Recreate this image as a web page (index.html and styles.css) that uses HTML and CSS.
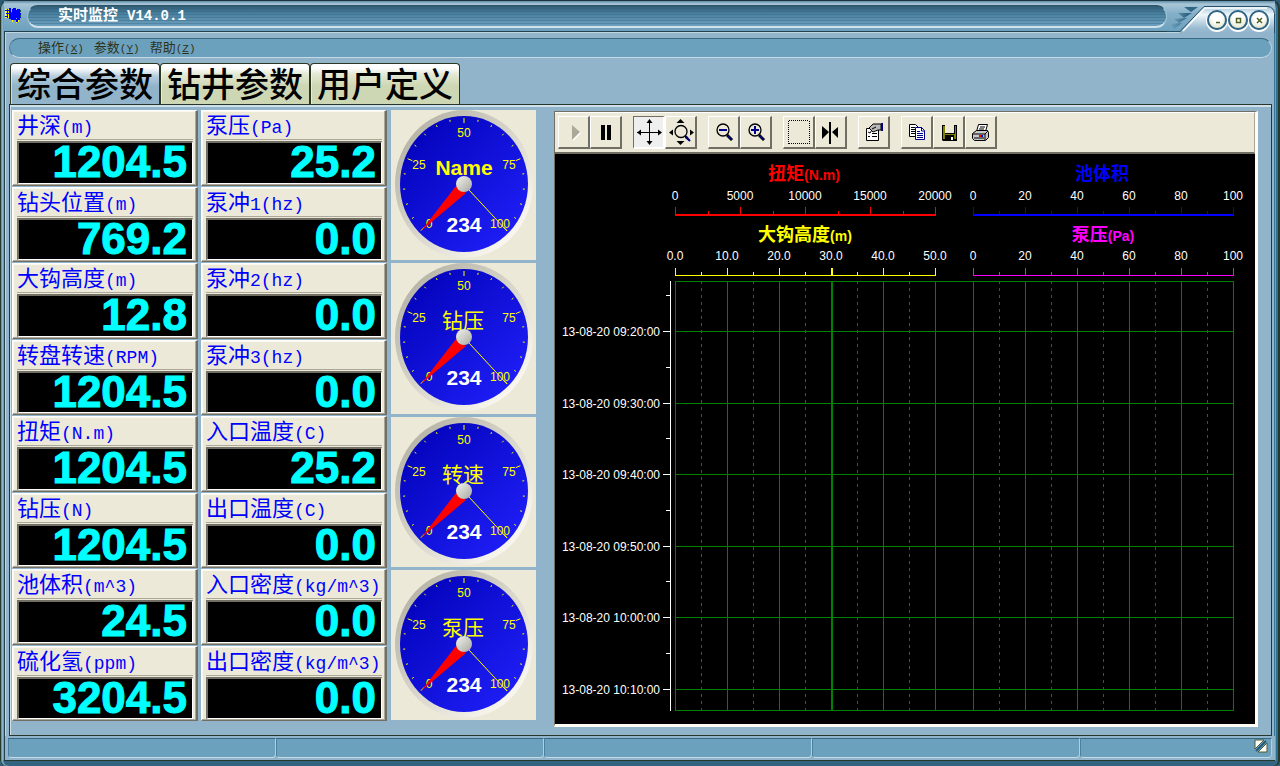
FILE: index.html
```
<!DOCTYPE html>
<html lang="zh-CN">
<head>
<meta charset="utf-8">
<title>实时监控 V14.0.1</title>
<link rel="stylesheet" href="styles.css">
</head>
<body>
<div class="window">
  <header class="titlebar">
    <svg class="app-icon" width="18" height="18" viewBox="0 0 18 18" shape-rendering="crispEdges" aria-hidden="true">
      <path d="M1 2h5v9H1z" fill="#ff0"/>
      <path d="M1 3h4v1H1zM2 6h4v1H2zM1 9h3v1H1zM3 2h1v9H3zM5 1h2v11H5zM8 2h1v3H8zM9 1h3v11H9zM6 5h3v6H6zM8 6h9v5H8zM12 3h1v3h-1zM13 2h3v11h-3zM7 11h4v2H7zM11 12h5v1h-5zM12 13h2v2h-2z" fill="#00f"/>
      <path d="M8 13h1v2H8zM12 15h1v1h-1zM14 13h1v2h-1z" fill="#ff0"/>
      <path d="M16 3h1v2h-1zM16 8h1v2h-1zM7 5h1v1H7z" fill="#064"/>
    </svg>
    <h1 class="title">实时监控 <span class="title-version">V14.0.1</span></h1>
    <div class="caption">
      <svg class="caption-art" width="108" height="33" viewBox="0 0 108 33" aria-hidden="true">
        <defs>
          <linearGradient id="cap" x1="0" y1="0" x2="0" y2="1"><stop offset="0" stop-color="#a9cbdd"/><stop offset=".3" stop-color="#eef6fa"/><stop offset=".8" stop-color="#9bbdd2"/><stop offset="1" stop-color="#91b4cb"/></linearGradient>
          <linearGradient id="fin"><stop offset="0" stop-color="#2f6684" stop-opacity="0"/><stop offset=".6" stop-color="#2f6684"/></linearGradient>
        </defs>
        <path d="M17 7l14 0-7 5zM11 13l14 0-8 5zM7 19l13-1-8 5zM3 24l12-1-8 6z" fill="url(#fin)"/>
        <path d="M12 33L37 7h66l5 5v21z" fill="url(#cap)"/>
        <path d="M0 31.500H13L37 6.500h64q6 1 6.500 7V33" fill="none" stroke="#24506c" stroke-width="1"/>
        <path d="M16 31L38 8h62" fill="none" stroke="#fff" stroke-width="1.500"/>
      </svg>
      <div class="caption-buttons">
        <button class="cap-btn" aria-label="最小化"><svg viewBox="0 0 7 7"><path d="M2 5.500h4" /></svg></button>
        <button class="cap-btn" aria-label="最大化"><svg viewBox="0 0 7 7"><path d="M1.500 1.500h4v4h-4z"/></svg></button>
        <button class="cap-btn" aria-label="关闭"><svg viewBox="0 0 7 7"><path d="M1 1l5 5M6 1l-5 5"/></svg></button>
      </div>
    </div>
  </header>

  <div class="client">
    <nav class="menubar">
      <button class="menu">操作<span class="key">(<u>X</u>)</span></button>
      <button class="menu">参数<span class="key">(<u>Y</u>)</span></button>
      <button class="menu">帮助<span class="key">(<u>Z</u>)</span></button>
    </nav>
    <div class="tabs" role="tablist">
      <button class="tab tab-active" role="tab" aria-selected="true">综合参数</button>
      <button class="tab" role="tab" aria-selected="false">钻井参数</button>
      <button class="tab" role="tab" aria-selected="false">用户定义</button>
    </div>

    <main class="page">
      <section class="readouts">
        <div class="panel"><div class="name">井深<span>(m)</span></div><output class="value">1204.5</output></div>
        <div class="panel"><div class="name">泵压<span>(Pa)</span></div><output class="value">25.2</output></div>
        <div class="panel"><div class="name">钻头位置<span>(m)</span></div><output class="value">769.2</output></div>
        <div class="panel"><div class="name">泵冲<span>1(hz)</span></div><output class="value">0.0</output></div>
        <div class="panel"><div class="name">大钩高度<span>(m)</span></div><output class="value">12.8</output></div>
        <div class="panel"><div class="name">泵冲<span>2(hz)</span></div><output class="value">0.0</output></div>
        <div class="panel"><div class="name">转盘转速<span>(RPM)</span></div><output class="value">1204.5</output></div>
        <div class="panel"><div class="name">泵冲<span>3(hz)</span></div><output class="value">0.0</output></div>
        <div class="panel"><div class="name">扭矩<span>(N.m)</span></div><output class="value">1204.5</output></div>
        <div class="panel"><div class="name">入口温度<span>(C)</span></div><output class="value">25.2</output></div>
        <div class="panel"><div class="name">钻压<span>(N)</span></div><output class="value">1204.5</output></div>
        <div class="panel"><div class="name">出口温度<span>(C)</span></div><output class="value">0.0</output></div>
        <div class="panel"><div class="name">池体积<span>(m^3)</span></div><output class="value">24.5</output></div>
        <div class="panel"><div class="name">入口密度<span>(kg/m^3)</span></div><output class="value">0.0</output></div>
        <div class="panel"><div class="name">硫化氢<span>(ppm)</span></div><output class="value">3204.5</output></div>
        <div class="panel"><div class="name">出口密度<span>(kg/m^3)</span></div><output class="value">0.0</output></div>
      </section>

      <section class="gauges">
        <div class="gauge" data-name="Name" data-value="234"></div>
        <div class="gauge" data-name="钻压" data-value="234"></div>
        <div class="gauge" data-name="转速" data-value="234"></div>
        <div class="gauge" data-name="泵压" data-value="234"></div>
      </section>

      <section class="chart">
        <div class="toolbar" role="toolbar">
          <div class="group">
            <button class="tool" aria-label="继续" disabled><svg viewBox="0 0 28 28"><path d="M14 9l8 7-8 8z" fill="#fff"/><path d="M13 8l8 7-8 8z" fill="#aca899"/></svg></button>
            <button class="tool" aria-label="暂停"><svg viewBox="0 0 28 28"><path d="M10 8h4v15h-4zM16 8h4v15h-4z"/></svg></button>
          </div>
          <div class="group">
            <button class="tool tool-on" aria-label="平移"><svg viewBox="0 0 28 28"><path d="M3 15h23v1H3zM15 3h1v24h-1z"/><path d="M3 15.500l4-3v6zM28 15.500l-4-3v6zM15.500 2l3 4h-6zM15.500 28l3-4h-6z"/></svg></button>
            <button class="tool" aria-label="缩放"><svg viewBox="0 0 28 28"><path d="M3 15.500l4-3v6zM28 15.500l-4-3v6zM14.500 2l4 4h-8zM14.500 28l4-4h-8z"/><circle cx="15" cy="14.500" r="6" fill="none" stroke="#000" stroke-width="1.300"/><path d="M19 18l2 1 3 4-1 1-4-3z"/><path d="M20 20l4 4" stroke="#008" stroke-width="2"/></svg></button>
          </div>
          <div class="group">
            <button class="tool" aria-label="缩小"><svg viewBox="0 0 28 28"><circle cx="14" cy="13" r="6" fill="none" stroke="#000" stroke-width="1.300"/><path d="M18 18l5 5" stroke="#000" stroke-width="3"/><path d="M19 19l4 4" stroke="#008" stroke-width="1.500"/><path d="M10 12h8v2h-8z" fill="#008"/></svg></button>
            <button class="tool" aria-label="放大"><svg viewBox="0 0 28 28"><circle cx="14" cy="13" r="6" fill="none" stroke="#000" stroke-width="1.300"/><path d="M18 18l5 5" stroke="#000" stroke-width="3"/><path d="M19 19l4 4" stroke="#008" stroke-width="1.500"/><path d="M10 12h8v2h-8zM13 9h2v8h-2z" fill="#008"/></svg></button>
          </div>
          <div class="group">
            <button class="tool" aria-label="框选"><svg viewBox="0 0 28 28" shape-rendering="crispEdges"><path d="M5 3.500h20M5 26.500h20M4.500 4v23M25.500 4v23" fill="none" stroke="#000" stroke-dasharray="1 1"/></svg></button>
            <button class="tool" aria-label="游标"><svg viewBox="0 0 28 28"><path d="M13 5h2v22h-2zM6 9l7 6-7 7zM22 10l-6 5 6 6z"/></svg></button>
          </div>
          <div class="group">
            <button class="tool" aria-label="属性"><svg viewBox="0 0 28 28"><path d="M7.500 11.500h12v12h-12z" fill="#fff" stroke="#000"/><path d="M9 15l2 1 2-3M9 19.500h2M13 16.500h5M13 19.500h5" stroke="#000" fill="none"/><path d="M10 11l4-4h8v6h-3l-5 2z" fill="#b8b8b8" stroke="#000"/><path d="M13 12l4-2" stroke="#000"/><path d="M22 6h2v8h-2z" fill="#008"/></svg></button>
          </div>
          <div class="group">
            <button class="tool" aria-label="复制"><svg viewBox="0 0 28 28"><path d="M7.500 7.500h6l3 3v9h-9z" fill="#fff" stroke="#000"/><path d="M9 10.500h4M9 12.500h5M9 14.500h5M9 16.500h5" stroke="#000"/><path d="M13.500 10.500h6l3 3v9h-9z" fill="#fff" stroke="#008"/><path d="M19.500 10v4h3M15 14.500h3M15 16.500h6M15 18.500h6M15 20.500h6" fill="none" stroke="#008"/></svg></button>
            <button class="tool" aria-label="保存"><svg viewBox="0 0 28 28"><path d="M8 8h15v16H9l-1-1z"/><path d="M9 9h2v8h10V9h1v13h-2v-4h-9v4H9z" fill="#808000"/><path d="M11 8h9v8h-9z" fill="#ece9d8"/><path d="M17 20h2v3h-2z" fill="#fff"/></svg></button>
            <button class="tool" aria-label="打印"><svg viewBox="0 0 28 28"><path d="M10.500 14.500l2-7h9l-2 7z" fill="#fff" stroke="#000"/><path d="M14 10h5M13 12h5" stroke="#000"/><path d="M6.500 16.500l4-3h11l1 2v5l-3 3h-11l-2-2z" fill="#c8c8c8" stroke="#000"/><path d="M7 17h12l3-3M19 17v6M8 21h10" fill="none" stroke="#000"/><path d="M13 18h2v2h-2z" fill="#f00"/><path d="M15 18h2v2h-2z" fill="#00f"/></svg></button>
          </div>
        </div>
        <svg class="plot" id="plot" viewBox="0 0 700 569" role="img" aria-label="实时曲线"></svg>
      </section>
    </main>
  </div>

  <footer class="statusbar">
    <div class="cell"></div><div class="cell"></div><div class="cell"></div><div class="cell"></div>
    <div class="cell cell-last">
      <svg width="14" height="14" viewBox="0 0 14 14" aria-hidden="true"><path d="M1 1h9L1 10z" fill="#fff" stroke="#4c5c30"/><path d="M13 4v9H4z" fill="#fff" stroke="#4c5c30"/><path d="M2 12L12 2" stroke="#245a78" stroke-width="2"/></svg>
    </div>
  </footer>
</div>
<script src="script.js"></script>
</body>
</html>
```
FILE: styles.css
```
* { box-sizing: border-box; }

body {
  margin: 0;
  background: #2e5c74;
  font-family: "Liberation Sans", "Noto Sans CJK SC", sans-serif;
}

button { margin: 0; padding: 0; border: 0; background: none; font: inherit; color: inherit; }

.window {
  display: flex;
  flex-direction: column;
  min-height: 100vh;
  padding: 0 5px 5px 4px;
  border-radius: 8px 8px 6px 6px;
  background: #6ca1be;
  border-top: 1px solid #1c3440;
  box-shadow: inset 1px 0 #26382c, inset 2px 0 #5f96b4, inset 3px 0 #8ab4cb, inset -2px 0 #26382c, inset -4px 0 #2f6f92, inset 0 -5px #336580;
}

/* Title bar */
.titlebar {
  display: flex;
  align-items: flex-start;
  height: 30px;
  background: linear-gradient(#5d8ca6, #a9c7d8 3px, #86b0c8 12px, #6ca1be);
}
.app-icon { margin: 6px 3px 0 0; }
.title {
  flex: 1;
  margin: 4px 0 0 2px;
  height: 23px;
  padding-left: 30px;
  border-radius: 11px;
  border: 1px solid #9dc1d4;
  border-top-color: #2c5266;
  border-bottom: 2px solid #cfe2ec;
  background: repeating-linear-gradient(transparent 0 2px, #2c607c55 2px 3px), linear-gradient(#315c74, #4a819f 8px, #6c9fbd);
  color: #fff;
  font-size: 15px;
  line-height: 20px;
  font-weight: bold;
  font-family: "Liberation Mono", "Noto Sans CJK SC", monospace;
}
.title-version { font-size: 14px; }
.caption { position: relative; flex: none; width: 108px; height: 30px; }
.caption-art { display: block; margin-top: -1px; }
.caption-buttons { position: absolute; right: 6px; top: 9px; display: flex; gap: 1px; }
.cap-btn {
  display: flex;
  align-items: center;
  justify-content: center;
  width: 20px;
  height: 20px;
  border-radius: 50%;
  border: 2px solid #2f6486;
  background: radial-gradient(circle at 50% 35%, #fff 35%, #d5dcb4);
  box-shadow: 0 1px 0 1px #fff;
}
.cap-btn svg { width: 7px; height: 7px; }
.cap-btn path { fill: none; stroke: #4c6020; stroke-width: 1.5; }

/* Client area */
.client {
  flex: 1;
  display: flex;
  flex-direction: column;
  padding: 0 3px 0 4px;
  background: #91b4cb;
  border-left: 1px solid #24404e;
  border-top: 1px solid #24404e;
  box-shadow: inset 1px 1px #bfd6e3, inset -1px 0 #3b7896;
}
.menubar {
  display: flex;
  gap: 10px;
  height: 20px;
  margin: 6px 0 5px;
  padding-left: 28px;
  border-radius: 10px;
  border-top: 1px solid #366983;
  border-left: 1px solid #4b819e;
  border-right: 1px solid #b8d0de;
  border-bottom: 1px solid #c4dae6;
  background: #6ca1be;
  color: #2d331a;
  font-size: 13px;
  line-height: 17px;
}
.key { font-size: 11px; font-family: "Liberation Mono", monospace; }

.tabs { display: flex; height: 41px; padding-left: 1px; }
.tab {
  width: 150px;
  padding-top: 2px;
  border: 1px solid #2c3820;
  border-bottom: 0;
  border-radius: 4px 4px 0 0;
  background: linear-gradient(#fff 4px, #e4e9d4 10px, #ced7b3 22px);
  box-shadow: inset 1px 0 #fff8;
  font-size: 34px;
  line-height: 38px;
  font-weight: 500;
  color: #000;
  white-space: nowrap;
}
.tab-active { background: linear-gradient(#fff 4px, #b7cedd 12px, #91b4cb 22px); }

.page {
  flex: 1;
  display: grid;
  grid-template-columns: 375px 145px minmax(300px, 1fr);
  column-gap: 4px;
  padding: 3px 13px 8px 2px;
  border: 1px solid #26382c;
  box-shadow: inset 1px 2px #d0e0ea;
}

/* Digital readouts */
.readouts {
  display: grid;
  grid-template-columns: 1fr 1fr;
  grid-auto-rows: 1fr;
  column-gap: 3px;
  row-gap: 1px;
  margin: 2px 0 6px;
}
.panel {
  display: flex;
  flex-direction: column;
  padding: 1px 3px 1px 4px;
  background: #ece9d8;
  border: 1px solid #fff;
  border-right: 2px solid #716f64;
  border-bottom: 1px solid #716f64;
  box-shadow: inset -1px -1px #aca899, inset 1px 1px #f8f7f0;
}
.name {
  flex: none;
  height: 28px;
  border-bottom: 1px solid #aca899;
  color: #00f;
  font-size: 22px;
  line-height: 28px;
  white-space: nowrap;
}
.name span { font-family: "Liberation Mono", monospace; font-size: 18px; }
.value {
  flex: 1;
  margin-top: 1px;
  padding-right: 5px;
  border: 2px solid #716f64;
  border-right: 1px solid #fff;
  border-bottom: 1px solid #fff;
  background: #000;
  color: #0ff;
  text-align: right;
  font-size: 44px;
  line-height: 38px;
  font-weight: bold;
  -webkit-text-stroke: 1px #0ff;
}

/* Dial gauges */
.gauges { display: grid; grid-auto-rows: 1fr; row-gap: 3px; margin: 2px 0 7px; }
.gauge { background: #ece9d8; }
.gauge svg { display: block; width: 100%; height: auto; }
.g-num { font: 12px "Liberation Sans", sans-serif; fill: #ff0; text-anchor: middle; }
.g-name { font-size: 21px; fill: #ff0; text-anchor: middle; }
.g-latin { font-weight: bold; }
.g-value { font-size: 21px; font-weight: bold; fill: #fff; text-anchor: middle; }

/* Trend chart */
.chart {
  margin: 3px 0 0 14px;
  border: 1px solid #716f64;
  border-right: 3px solid #fffdf5;
  border-bottom: 3px solid #fffdf5;
  background: #000;
}
.toolbar {
  display: flex;
  flex-wrap: wrap;
  gap: 11px;
  padding: 3px;
  background: #ece9d8;
  border-top: 1px solid #fff;
  border-right: 1px solid #aca899;
  border-bottom: 2px solid #716f64;
}
.group { display: flex; }
.tool {
  display: flex;
  align-items: flex-start;
  justify-content: flex-start;
  width: 32px;
  height: 33px;
  border: 1px solid #fff;
  border-right: 2px solid #716f64;
  border-bottom: 2px solid #716f64;
  background: #ece9d8;
}
.tool-on { background: #f0eff0; border-color: #716f64 #fff #fff #716f64; }
.tool svg { flex: none; width: 28px; height: 28px; }
.plot { display: block; width: 100%; height: auto; }
.p-num { font: 12px "Liberation Sans", sans-serif; fill: #fff; text-anchor: middle; }
.p-time { text-anchor: end; }
.p-title { font: bold 18px "Noto Sans CJK SC", sans-serif; text-anchor: middle; }
.p-unit { font-family: "Liberation Sans", sans-serif; font-size: 14px; }

/* Status bar */
.statusbar {
  display: flex;
  height: 25px;
  padding: 2px 3px;
  background: #91b4cb;
  border-left: 1px solid #24404e;
  border-bottom: 1px solid #26382c;
}
.cell {
  flex: 268;
  border-top: 1px solid #366983;
  border-right: 1px solid #b5cfdd;
  border-bottom: 1px solid #c4dae6;
  border-left: 1px solid #4b819e;
  border-radius: 0 0 4px 4px;
  background: #6ca1be;
}
.cell-last { flex: 188; display: flex; justify-content: flex-end; padding-right: 3px; }
```
FILE: script.js
```
(function () {
  // Dial gauges: 270 degree sweep, 0..100
  var CX = 73, CY = 74;
  function pt(v, inset) {
    var a = (225 - v * 2.7) * Math.PI / 180;
    return (CX + (61 - inset) * Math.cos(a)).toFixed(1) + ' ' + (CY - (66 - inset) * Math.sin(a)).toFixed(1);
  }
  document.querySelectorAll('.gauge').forEach(function (el, i) {
    var ticks = '';
    for (var v = 0; v <= 100; v += 5) {
      ticks += 'M' + pt(v, 0) + 'L' + pt(v, v % 25 ? 2 : 5);
    }
    var latin = /^[A-Za-z]/.test(el.dataset.name);
    el.innerHTML =
      '<svg viewBox="0 0 145 150">' +
      '<defs><linearGradient id="ring' + i + '" x1="0" y1="0" x2="1" y2="1"><stop offset=".15" stop-color="#b9b7aa"/><stop offset=".85" stop-color="#f8f6ee"/></linearGradient>' +
      '<linearGradient id="face' + i + '" x1="0" y1="0" x2="1" y2="1"><stop offset="0" stop-color="#0000b4"/><stop offset="1" stop-color="#2222ff"/></linearGradient>' +
      '<linearGradient id="hub' + i + '" x1="0" y1="0" x2="1" y2="1"><stop offset="0" stop-color="#f4f4f0"/><stop offset="1" stop-color="#a8a8a0"/></linearGradient></defs>' +
      '<ellipse cx="73" cy="74" rx="69" ry="74" fill="url(#ring' + i + ')"/>' +
      '<ellipse cx="73" cy="74" rx="64" ry="68" fill="url(#face' + i + ')"/>' +
      '<path d="' + ticks + '" stroke="#ff0" fill="none"/>' +
      '<text class="g-num" x="73" y="27">50</text><text class="g-num" x="28" y="59">25</text>' +
      '<text class="g-num" x="118" y="59">75</text><text class="g-num" x="38" y="118">0</text>' +
      '<text class="g-num" x="109" y="118">100</text>' +
      '<text class="g-name' + (latin ? ' g-latin' : '') + '" x="' + (latin ? 73 : 72) + '" y="65">' + el.dataset.name + '</text>' +
      '<path d="M78 80L116 121" stroke="#ff0"/>' +
      '<path d="M30 121L65 76L75 83z" fill="#f00"/>' +
      '<circle cx="73" cy="74" r="8" fill="url(#hub' + i + ')"/>' +
      '<text class="g-value" x="73" y="122">' + el.dataset.value + '</text></svg>';
  });

  // Trend chart
  var out = '';
  function rect(x, y, w, h, c) {
    out += '<rect x="' + x + '" y="' + y + '" width="' + w + '" height="' + h + '" fill="' + c + '"/>';
  }
  function text(x, y, cls, s) {
    out += '<text class="' + cls + '" x="' + x + '" y="' + y + '">' + s + '</text>';
  }
  function axis(x0, base, thick, color, labels) {
    var n = (labels.length - 1) * 2, w = 260;
    rect(x0, base, w + 1, thick, color);
    for (var i = 0; i <= n; i++) {
      var x = x0 + Math.round(i * w / n), h = i % 2 ? 3 : 7;
      rect(x, base - h, labels[i / 2] === '30.0' ? 2 : 1, h, color);
      if (i % 2 === 0) text(x, base - (thick === 2 ? 14 : 15), 'p-num', labels[i / 2]);
    }
  }
  function title(x, y, color, name, unit) {
    out += '<text class="p-title" x="' + x + '" y="' + y + '" fill="' + color + '">' + name +
      (unit ? '<tspan class="p-unit">' + unit + '</tspan>' : '') + '</text>';
  }
  var hundred = ['0', '20', '40', '60', '80', '100'];
  title(249, 26, '#f00', '扭矩', '(N.m)');
  title(547, 26, '#00f', '池体积', '');
  title(250, 87, '#ff0', '大钩高度', '(m)');
  title(548, 87, '#f0f', '泵压', '(Pa)');
  axis(120, 60, 2, '#f00', ['0', '5000', '10000', '15000', '20000']);
  axis(418, 60, 2, '#00f', hundred);
  axis(120, 121, 1, '#ff0', ['0.0', '10.0', '20.0', '30.0', '40.0', '50.0']);
  axis(418, 121, 1, '#f0f', hundred);

  var G = '#008000', top = 127, bottom = 556;
  [120, 418].forEach(function (x0) {
    for (var i = 0; i <= 10; i++) {
      var x = x0 + i * 26;
      if (i % 2) {
        out += '<path d="M' + (x + 0.5) + ' ' + top + 'V' + bottom + '" stroke="' + G + '" stroke-dasharray="3 4"/>';
      } else {
        rect(x, top, x === 276 ? 2 : 1, bottom - top, G);
      }
    }
  });
  rect(120, top, 559, 1, G);
  rect(120, bottom, 559, 1, G);
  rect(115, top, 1, bottom - top + 1, '#fff');
  ['09:20:00', '09:30:00', '09:40:00', '09:50:00', '10:00:00', '10:10:00'].forEach(function (t, i) {
    var y = 177 + Math.round(i * 71.6);
    rect(120, y, 559, 1, G);
    rect(108, y, 7, 1, '#fff');
    rect(111, y - 36, 4, 1, '#fff');
    text(105, y + 5, 'p-num p-time', '13-08-20 ' + t);
  });
  document.getElementById('plot').innerHTML = '<g shape-rendering="crispEdges">' + out + '</g>';
})();
```
